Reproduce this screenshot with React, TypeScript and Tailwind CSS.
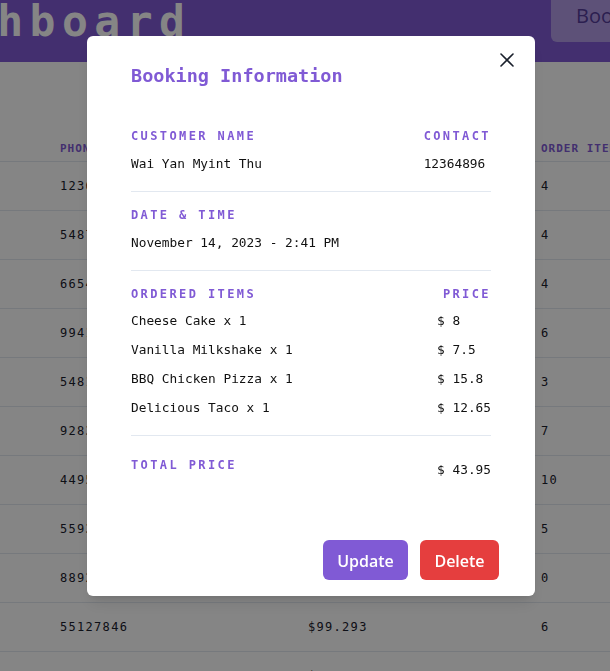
import React from "react";

const rows = [
  { phone: "12364896", price: "$43.95", items: "4" },
  { phone: "54873210", price: "$38.10", items: "4" },
  { phone: "66541230", price: "$52.40", items: "4" },
  { phone: "99412873", price: "$71.25", items: "6" },
  { phone: "54812934", price: "$29.80", items: "3" },
  { phone: "92837461", price: "$84.15", items: "7" },
  { phone: "44956102", price: "$120.5", items: "10" },
  { phone: "55938271", price: "$61.70", items: "5" },
  { phone: "88927364", price: "$0", items: "0" },
  { phone: "55127846", price: "$99.293", items: "6" },
  { phone: "33418290", price: "$45.60", items: "2" },
];

const items = [
  { name: "Cheese Cake x 1", price: "$ 8" },
  { name: "Vanilla Milkshake x 1", price: "$ 7.5" },
  { name: "BBQ Chicken Pizza x 1", price: "$ 15.8" },
  { name: "Delicious Taco x 1", price: "$ 12.65" },
];

function Label({ children, className = "" }: { children: React.ReactNode; className?: string }) {
  return (
    <div
      className={
        "font-['DejaVu_Sans_Mono',monospace] text-[12px] leading-4 tracking-[2.4px] font-bold text-[#805ad5] " +
        className
      }
    >
      {children}
    </div>
  );
}

function Value({ children, className = "" }: { children: React.ReactNode; className?: string }) {
  return (
    <div className={"font-['DejaVu_Sans_Mono',monospace] text-[12.8px] leading-5 text-[#111111] " + className}>
      {children}
    </div>
  );
}

export default function App() {
  return (
    <div className="relative h-[671px] w-full overflow-hidden bg-white">
      {/* Header */}
      <div className="flex h-[62px] w-full items-start overflow-hidden bg-[#805ad5]">
        <div className="ml-[-100px] whitespace-nowrap font-['DejaVu_Sans_Mono',monospace] text-[43px] font-bold leading-none tracking-[6.5px] text-white">
          Dashboard
        </div>
        <div className="ml-auto flex h-[42px] w-[59px] shrink-0 items-start overflow-hidden rounded-bl-md bg-white/40 pl-[25px] pt-[2px]">
          <span className="whitespace-nowrap font-['Open_Sans',sans-serif] text-[20px] leading-7 text-[#553c9a]">
            Booking
          </span>
        </div>
      </div>

      {/* Table */}
      <div className="pt-[76px]">
        <div className="grid h-[24px] grid-cols-[248px_233px_1fr] items-center border-b border-[#e2e8f0] pl-[60px] font-['DejaVu_Sans_Mono',monospace] text-[11px] font-bold tracking-[1px] text-[#805ad5]">
          <div>PHONE</div>
          <div>TOTAL PRICE</div>
          <div className="whitespace-nowrap">ORDER ITEMS</div>
        </div>
        {rows.map((r, i) => (
          <div
            key={i}
            className="grid h-[49px] grid-cols-[248px_233px_1fr] items-center border-b border-[#e2e8f0] pl-[60px] font-['DejaVu_Sans_Mono',monospace] text-[12px] tracking-[1.3px] text-[#1a202c]"
          >
            <div>{r.phone}</div>
            <div>{r.price}</div>
            <div>{r.items}</div>
          </div>
        ))}
      </div>

      {/* Overlay */}
      <div className="fixed inset-0 flex items-start bg-black/[0.48] pl-[87px] pt-[36px]">
        <div className="relative flex h-[560px] w-[448px] flex-col rounded-md bg-white px-[44px] pt-[26px] shadow-lg">
          <button className="absolute right-3 top-2 flex h-8 w-8 items-center justify-center rounded-md">
            <svg width="14" height="14" viewBox="0 0 14 14" fill="none">
              <path d="M1 1L13 13M13 1L1 13" stroke="#1a202c" strokeWidth="1.6" strokeLinecap="round" />
            </svg>
          </button>

          <div className="font-['DejaVu_Sans_Mono',monospace] text-[18.5px] font-bold leading-7 text-[#805ad5]">
            Booking Information
          </div>

          <div className="mt-[38px] flex justify-between">
            <div className="flex flex-col gap-[10px]">
              <Label>CUSTOMER NAME</Label>
              <Value>Wai Yan Myint Thu</Value>
            </div>
            <div className="flex flex-col gap-[10px]">
              <Label>CONTACT</Label>
              <Value>12364896</Value>
            </div>
          </div>

          <div className="mt-[17px] h-px bg-[#e2e8f0]" />

          <div className="mt-[15px] flex flex-col gap-[10px]">
            <Label>DATE &amp; TIME</Label>
            <Value>November 14, 2023 - 2:41 PM</Value>
          </div>

          <div className="mt-[17px] h-px bg-[#e2e8f0]" />

          <div className="mt-[15px] grid grid-cols-[1fr_auto] gap-y-[9px]">
            <Label>ORDERED ITEMS</Label>
            <Label className="text-right">PRICE</Label>
            {items.map((it, i) => (
              <React.Fragment key={i}>
                <Value>{it.name}</Value>
                <Value>{it.price}</Value>
              </React.Fragment>
            ))}
          </div>

          <div className="mt-[17px] h-px bg-[#e2e8f0]" />

          <div className="mt-[21px] flex items-start justify-between">
            <Label>TOTAL PRICE</Label>
            <Value className="pt-[3px]">$ 43.95</Value>
          </div>

          <div className="mr-[-8px] mt-auto flex justify-end gap-3 pb-4">
            <button className="flex h-10 w-[85px] items-center justify-center rounded-md bg-[#805ad5] pt-[1px] font-['Open_Sans',sans-serif] text-[16px] font-semibold text-white">
              Update
            </button>
            <button className="flex h-10 w-[79px] items-center justify-center rounded-md bg-[#e53e3e] pt-[1px] font-['Open_Sans',sans-serif] text-[16px] font-semibold text-white">
              Delete
            </button>
          </div>
        </div>
      </div>
    </div>
  );
}
